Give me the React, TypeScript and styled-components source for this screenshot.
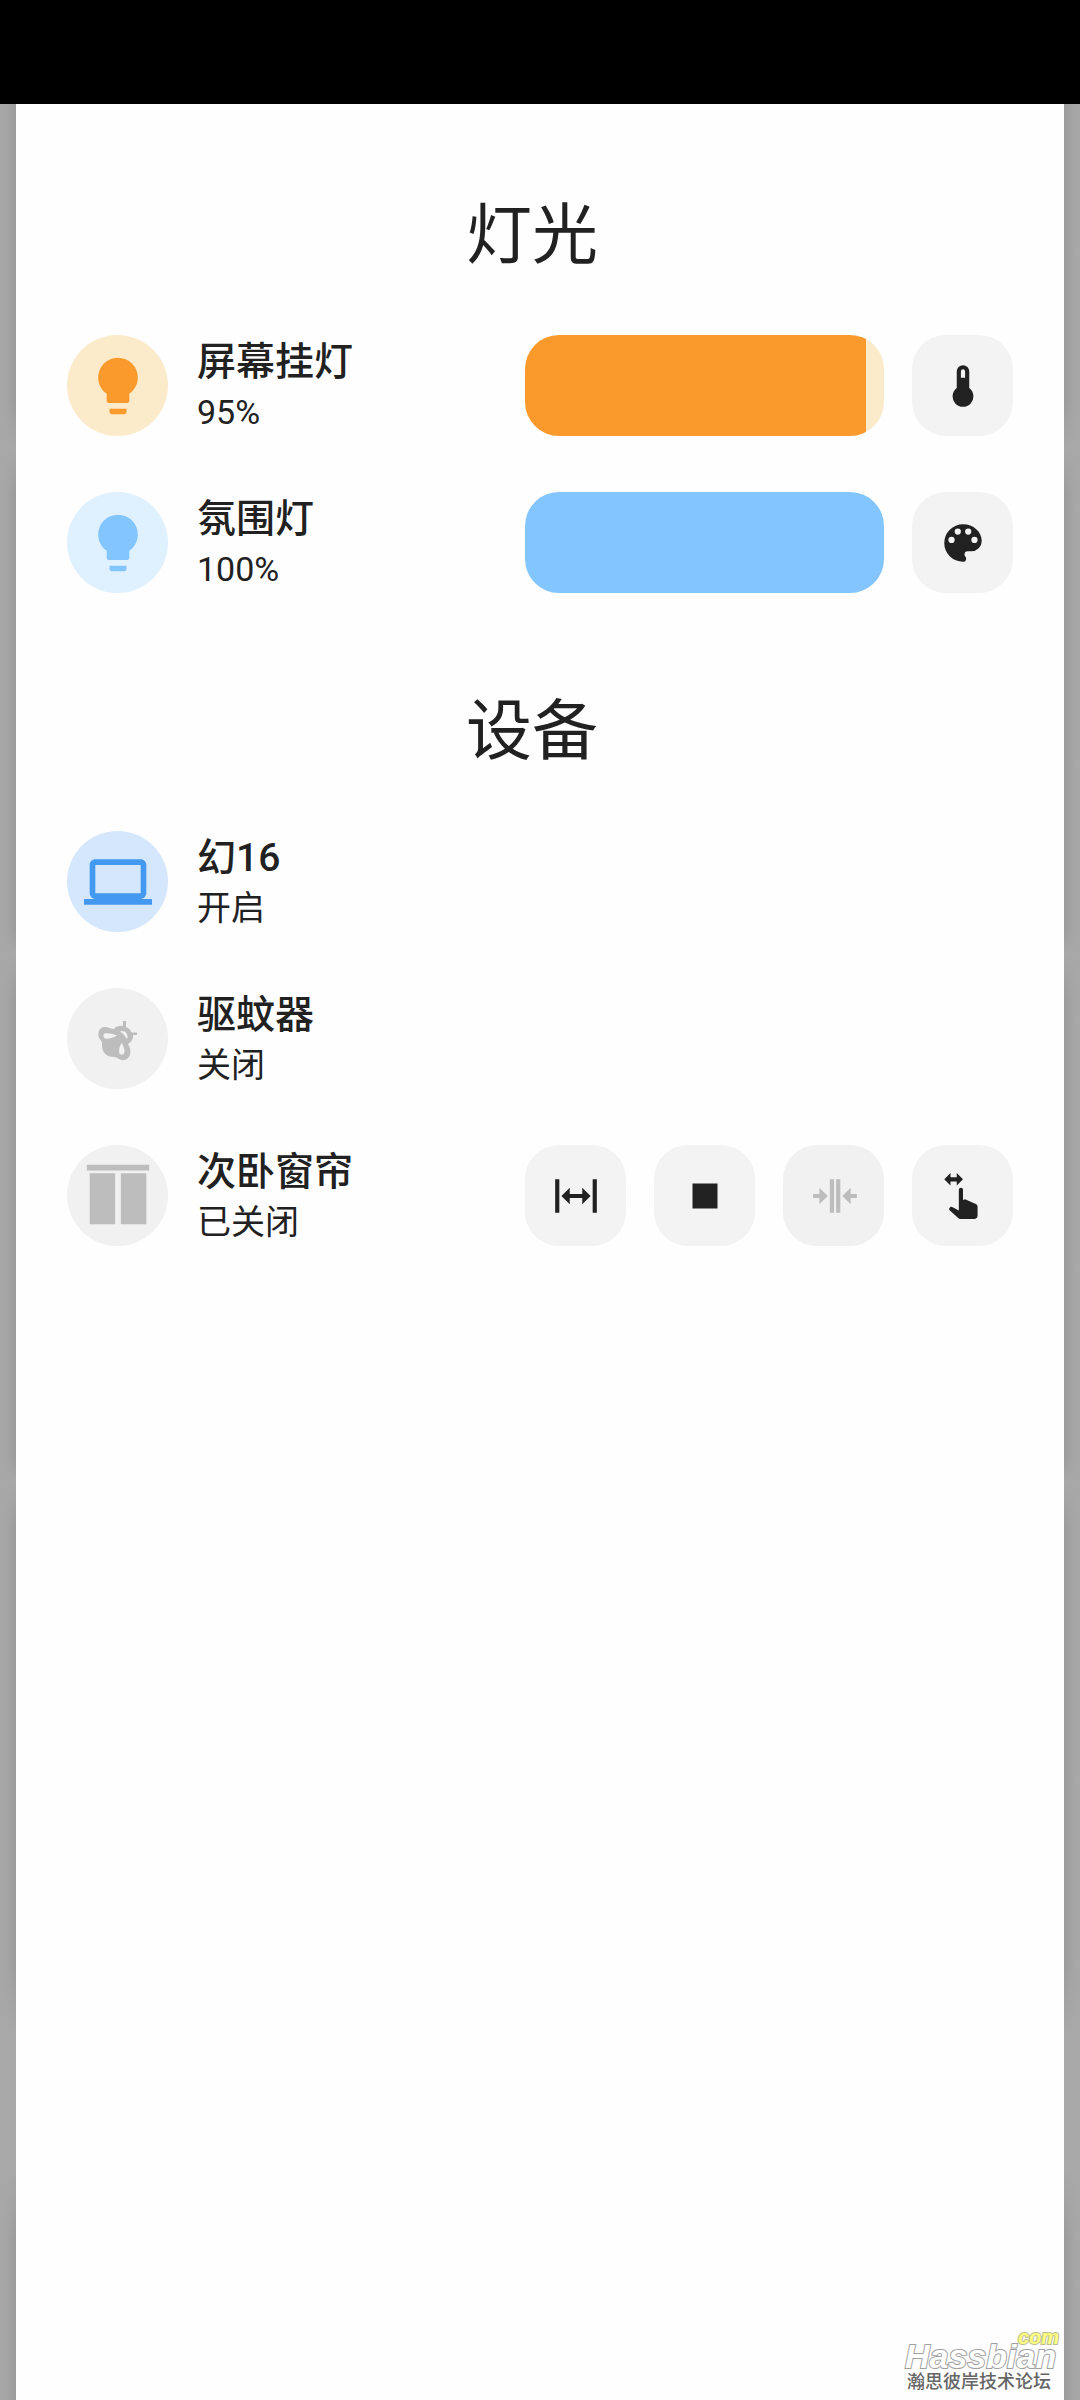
import React, { useState } from "react";
import styled, { createGlobalStyle } from "styled-components";

const GlobalStyle = createGlobalStyle`
  *, *::before, *::after { box-sizing: border-box; }
  body {
    margin: 0;
    background: #a8a8a8;
    color: #212121;
    font-family: Roboto, "Noto Sans CJK SC", sans-serif;
  }
`;

const Screen = styled.div`
  display: flex;
  flex-direction: column;
  min-height: 100vh;
`;

const StatusBar = styled.header`
  flex: none;
  height: 104px;
  background: #000;
`;

const Backdrop = styled.div`
  flex: 1;
  display: flex;
`;

/* Dimmed strip of the dashboard that stays visible beside the dialog */
const Edge = styled.div<{ $side: "left" | "right" }>`
  flex: none;
  width: 16px;
  background:
    linear-gradient(
      to bottom,
      transparent 13%, #a8a8a8 15%, transparent 17%,
      transparent 36%, #a8a8a8 37%, transparent 39%,
      transparent 59%, #a8a8a8 60%, transparent 62%,
      transparent 81%, #a8a8a8 84%, #a8a8a8 90%, transparent 93%
    ),
    linear-gradient(to ${(p) => p.$side}, #a8a8a8, #a6a6a6 40%, #9b9b9b);
`;

const Dialog = styled.main`
  position: relative;
  flex: 1;
  min-width: 0;
  padding: 96px 51px 140px;
  background: #fefefe;
`;

const Section = styled.section`
  & + & { margin-top: 103px; }
`;

const Title = styled.h2`
  margin: 0 0 63px;
  padding-right: 16px;
  font-size: 66px;
  line-height: 72px;
  font-weight: 400;
  text-align: center;
`;

const Rows = styled.div`
  display: flex;
  flex-direction: column;
  gap: 56px;
`;

const Row = styled.div`
  display: grid;
  grid-template-columns: minmax(0, 15fr) minmax(0, 17fr);
  gap: 28px;
  align-items: center;
`;

const Entity = styled.div`
  display: flex;
  align-items: center;
  gap: 29px;
`;

const Shape = styled.button<{ $bg: string; $fg: string }>`
  flex: none;
  display: grid;
  place-items: center;
  width: 101px;
  height: 101px;
  padding: 0;
  border: 0;
  border-radius: 50%;
  background: ${(p) => p.$bg};
  color: ${(p) => p.$fg};
  cursor: pointer;
`;

const Info = styled.div`
  min-width: 0;
`;

const Name = styled.div`
  font-size: 39px;
  line-height: 52px;
  font-weight: 500;
  white-space: nowrap;
`;

const State = styled.div`
  font-size: 34px;
  line-height: 48px;
  white-space: nowrap;
`;

const Controls = styled.div`
  display: flex;
  gap: 28px;
`;

const Slider = styled.input<{ $fill: string; $track: string; $value: number }>`
  appearance: none;
  flex: 1;
  min-width: 0;
  height: 101px;
  margin: 0;
  border-radius: 34px;
  background: linear-gradient(
    to right,
    ${(p) => p.$fill} ${(p) => p.$value}%,
    ${(p) => p.$track} ${(p) => p.$value}%
  );
  cursor: pointer;

  &::-webkit-slider-thumb {
    appearance: none;
    width: 1px;
    height: 101px;
    background: transparent;
  }
`;

const ControlButton = styled.button<{ $wide?: boolean }>`
  flex: ${(p) => (p.$wide ? "1 1 0" : "0 0 101px")};
  display: grid;
  place-items: center;
  height: 101px;
  padding: 0;
  border: 0;
  border-radius: 34px;
  background: #f3f3f3;
  color: #212121;
  cursor: pointer;

  &:disabled {
    background: #f1f1f1;
    color: #bdbdbd;
    cursor: default;
  }
`;

const Watermark = styled.div`
  position: absolute;
  right: 5px;
  bottom: 4px;
  width: 154px;
`;

const Domain = styled.div`
  font: italic bold 20px/14px "Liberation Sans", Arial, sans-serif;
  color: #ffff80;
  text-align: right;
  -webkit-text-stroke: 2px #bcbc90;
  paint-order: stroke fill;
`;

const Brand = styled.div`
  font: italic bold 34px/24px "Liberation Sans", Arial, sans-serif;
  color: #fff;
  -webkit-text-stroke: 2px #a0a0a0;
  paint-order: stroke fill;
`;

const Slogan = styled.div`
  padding-left: 2px;
  font-size: 18px;
  line-height: 28px;
  font-weight: 500;
  color: #666;
  white-space: nowrap;
`;

const paths = {
  bulb: "M12,2A7,7 0 0,0 5,9C5,11.38 6.19,13.47 8,14.74V17A1,1 0 0,0 9,18H15A1,1 0 0,0 16,17V14.74C17.81,13.47 19,11.38 19,9A7,7 0 0,0 12,2M9,21A1,1 0 0,0 10,22H14A1,1 0 0,0 15,21V20H9V21Z",
  thermometer: "M15 13V5A3 3 0 0 0 9 5V13A5 5 0 1 0 15 13M12 4A1 1 0 0 1 13 5V8H11V5A1 1 0 0 1 12 4Z",
  palette: "M17.5,12A1.5,1.5 0 0,1 16,10.5A1.5,1.5 0 0,1 17.5,9A1.5,1.5 0 0,1 19,10.5A1.5,1.5 0 0,1 17.5,12M14.5,8A1.5,1.5 0 0,1 13,6.5A1.5,1.5 0 0,1 14.5,5A1.5,1.5 0 0,1 16,6.5A1.5,1.5 0 0,1 14.5,8M9.5,8A1.5,1.5 0 0,1 8,6.5A1.5,1.5 0 0,1 9.5,5A1.5,1.5 0 0,1 11,6.5A1.5,1.5 0 0,1 9.5,8M6.5,12A1.5,1.5 0 0,1 5,10.5A1.5,1.5 0 0,1 6.5,9A1.5,1.5 0 0,1 8,10.5A1.5,1.5 0 0,1 6.5,12M12,3A9,9 0 0,0 3,12A9,9 0 0,0 12,21A1.5,1.5 0 0,0 13.5,19.5C13.5,19.11 13.35,18.76 13.11,18.5C12.88,18.23 12.73,17.88 12.73,17.5A1.5,1.5 0 0,1 14.23,16H16A5,5 0 0,0 21,11C21,6.58 16.97,3 12,3Z",
  laptop: "M4,6H20V16H4M20,18A2,2 0 0,0 22,16V6C22,4.89 21.1,4 20,4H4C2.89,4 2,4.89 2,6V16A2,2 0 0,0 4,18H0V20H24V18H20Z",
  curtains: "M23 3H1V1H23V3M2 22H11V4H2V22M22 4H13V22H22V4Z",
  open: "M9,11H15V8L19,12L15,16V13H9V16L5,12L9,8V11M2,20V4H4V20H2M20,20V4H22V20H20Z",
  stop: "M18,18H6V6H18V18Z",
  close: "M13,20V4H15.03V20H13M10,20V4H12.03V20H10M5,8L9.03,12L5,16V13H2V11H5V8M20,16L16,12L20,8V11H23V13H20V16Z",
  swipe: "M6,1L3,4L6,7V5H9V7L12,4L9,1V3H6V1M11,8A1,1 0 0,0 10,9V19L6.8,17.28C6.3,17 5.9,17.3 5.6,17.6C5.2,18 5.3,18.6 5.7,18.9L9.7,22.57C9.96,22.84 10.32,23 10.7,23H17.3C18.3,23 19,22.3 19,21.3V17.14C19,16.5 18.68,16.04 18.11,15.79L13,13.6L12,13.9V9A1,1 0 0,0 11,8Z",
};

function Icon({ name, size }: { name: keyof typeof paths; size: number }) {
  return (
    <svg width={size} height={size} viewBox="0 0 24 24" fill="currentColor" aria-hidden="true">
      <path d={paths[name]} />
    </svg>
  );
}

function MosquitoIcon() {
  return (
    <svg width="52" height="52" viewBox="0 0 52 52" fill="currentColor" aria-hidden="true">
      <path d="M13 14C16 14 19 16 22 16C24 13 28 12.500 31 13V8H34V14C37 15 38.500 17 39.500 19.500H45V22H41C41.500 26 39.500 29 36 31C38 34 39 38 38 42C36.500 46 32 48.500 28 46.500C26 45.500 24.500 44 22 44C15 44 10 40 10 32C10 30 10 29 9.500 28C7 26 6 23 6.500 20C7 16.500 9 14 13 14Z" />
      <g fill="#f1f1f1">
        <path d="M12.500 20.500C16 19.500 22 21 25 22.500C22 24.500 15 26.500 13 25.500C11 24.500 11 21.500 12.500 20.500Z" />
        <path d="M28 18.500C32 17 36 20 35.500 25C33.500 26.500 34 22 28 18.500Z" />
        <path d="M29.500 30C31.500 32.500 33.500 38 32 40.500C31 42 28.500 42 27.500 40.500C26 38 28 32.500 29.500 30Z" />
      </g>
    </svg>
  );
}

interface EntityProps {
  name: string;
  state: string;
  bg: string;
  fg: string;
  icon: React.ReactNode;
}

function EntityInfo({ name, state, bg, fg, icon }: EntityProps) {
  return (
    <Entity>
      <Shape type="button" aria-label={name} $bg={bg} $fg={fg}>{icon}</Shape>
      <Info>
        <Name>{name}</Name>
        <State>{state}</State>
      </Info>
    </Entity>
  );
}

interface LightProps {
  name: string;
  initial: number;
  fill: string;
  track: string;
  action: "thermometer" | "palette";
  actionLabel: string;
}

function LightRow({ name, initial, fill, track, action, actionLabel }: LightProps) {
  const [value, setValue] = useState(initial);
  return (
    <Row>
      <EntityInfo name={name} state={`${value}%`} bg={track} fg={fill} icon={<Icon name="bulb" size={68} />} />
      <Controls>
        <Slider
          type="range"
          min={0}
          max={100}
          value={value}
          onChange={(e) => setValue(Number(e.target.value))}
          aria-label={`${name}亮度`}
          $fill={fill}
          $track={track}
          $value={value}
        />
        <ControlButton type="button" aria-label={actionLabel}>
          <Icon name={action} size={50} />
        </ControlButton>
      </Controls>
    </Row>
  );
}

export default function App() {
  return (
    <Screen>
      <GlobalStyle />
      <StatusBar />
      <Backdrop>
        <Edge $side="right" />
        <Dialog>
          <Section>
            <Title>灯光</Title>
            <Rows>
              <LightRow name="屏幕挂灯" initial={95} fill="#fb9a2c" track="#fcebcb" action="thermometer" actionLabel="色温" />
              <LightRow name="氛围灯" initial={100} fill="#82c5ff" track="#dff0ff" action="palette" actionLabel="颜色" />
            </Rows>
          </Section>
          <Section>
            <Title>设备</Title>
            <Rows>
              <Row>
                <EntityInfo name="幻16" state="开启" bg="#d5e7fc" fg="#4398f0" icon={<Icon name="laptop" size={68} />} />
              </Row>
              <Row>
                <EntityInfo name="驱蚊器" state="关闭" bg="#f1f1f1" fg="#bdbdbd" icon={<MosquitoIcon />} />
              </Row>
              <Row>
                <EntityInfo name="次卧窗帘" state="已关闭" bg="#f1f1f1" fg="#bdbdbd" icon={<Icon name="curtains" size={68} />} />
                <Controls>
                  <ControlButton type="button" $wide aria-label="打开"><Icon name="open" size={50} /></ControlButton>
                  <ControlButton type="button" $wide aria-label="停止"><Icon name="stop" size={50} /></ControlButton>
                  <ControlButton type="button" $wide aria-label="关闭" disabled><Icon name="close" size={50} /></ControlButton>
                  <ControlButton type="button" $wide aria-label="位置"><Icon name="swipe" size={50} /></ControlButton>
                </Controls>
              </Row>
            </Rows>
          </Section>
          <Watermark>
            <Domain>com</Domain>
            <Brand>Hassbian</Brand>
            <Slogan>瀚思彼岸技术论坛</Slogan>
          </Watermark>
        </Dialog>
        <Edge $side="left" />
      </Backdrop>
    </Screen>
  );
}
